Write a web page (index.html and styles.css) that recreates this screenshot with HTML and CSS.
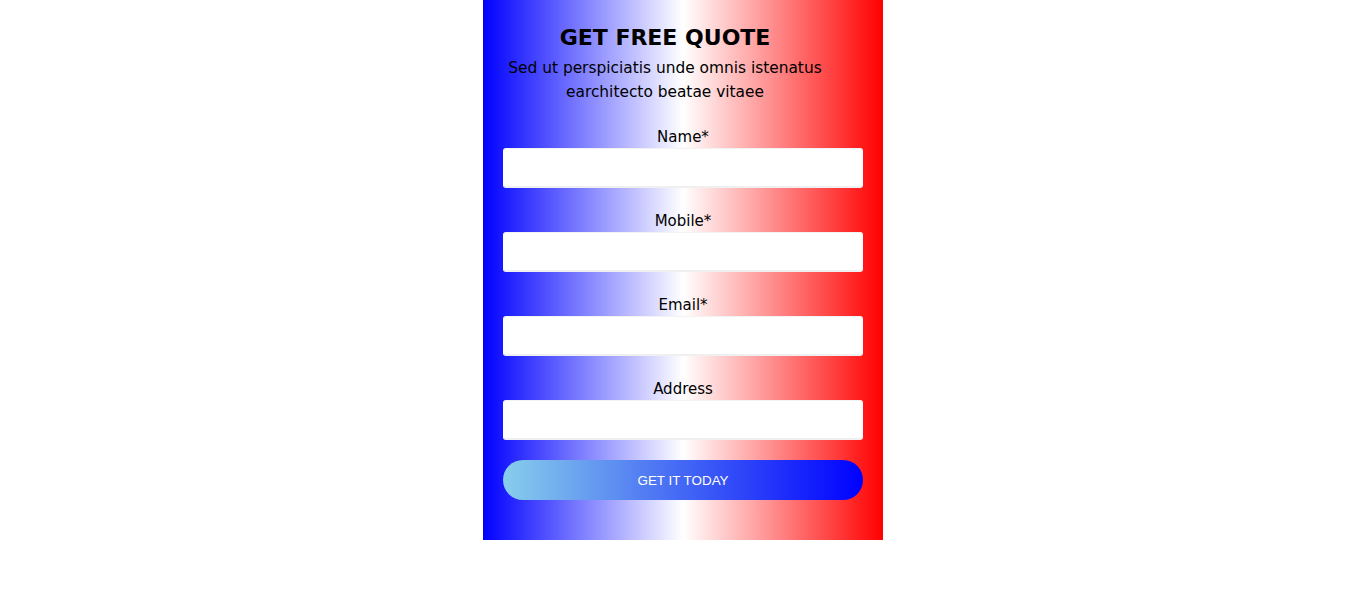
FILE: index.html
```html
<!DOCTYPE html>
<html lang="en">
<head>
<meta charset="utf-8">
<title>Get Free Quote</title>
<link rel="stylesheet" href="styles.css">
</head>
<body>
<div class="quote">
  <div class="quote-head">
    <h2 class="quote-title">GET FREE QUOTE</h2>
    <p class="quote-sub">Sed ut perspiciatis unde omnis istenatus earchitecto beatae vitaee</p>
  </div>
  <form class="quote-form">
    <div class="field">
      <label class="field-label" for="name">Name*</label>
      <input class="field-input" id="name" type="text">
    </div>
    <div class="field">
      <label class="field-label" for="mobile">Mobile*</label>
      <input class="field-input" id="mobile" type="text">
    </div>
    <div class="field">
      <label class="field-label" for="email">Email*</label>
      <input class="field-input" id="email" type="text">
    </div>
    <div class="field">
      <label class="field-label" for="address">Address</label>
      <input class="field-input" id="address" type="text">
    </div>
    <button class="quote-btn" type="button">GET IT TODAY</button>
  </form>
</div>
</body>
</html>
```

FILE: styles.css
```css
html, body {
  margin: 0;
  padding: 0;
  background: #fff;
}
body {
  font-family: "DejaVu Sans", "Liberation Sans", sans-serif;
  color: #000;
}
.quote {
  width: 400px;
  height: 540px;
  box-sizing: border-box;
  margin: 0 auto;
  padding: 23px 20px 20px;
  background: linear-gradient(to right, #0000ff, #ffffff, #ff0000);
}
.quote-head {
  padding-right: 36px;
  text-align: center;
}
.quote-title {
  margin: 0;
  font-size: 22px;
  line-height: 29px;
  font-weight: bold;
}
.quote-sub {
  margin: 4px 0 0;
  font-size: 15.4px;
  line-height: 24px;
}
.quote-form {
  margin-top: 20px;
  display: flex;
  flex-direction: column;
}
.field {
  display: flex;
  flex-direction: column;
  margin-bottom: 20px;
}
.field-label {
  text-align: center;
  font-size: 15px;
  line-height: 24px;
  padding-top: 1px;
  margin-bottom: -1px;
}
.field-input {
  height: 40px;
  box-sizing: border-box;
  border: none;
  border-top: 1px solid #f3f3f3;
  border-bottom: 2px solid #f0f0f0;
  border-radius: 3px;
  background: #fff;
  outline: none;
  margin: 0;
}
.quote-btn {
  height: 40px;
  border: none;
  border-radius: 20px;
  background: linear-gradient(to right, #87ceeb, #0000ff);
  color: #fff;
  font-family: "Liberation Sans", Arial, sans-serif;
  font-size: 13.4px;
  cursor: pointer;
}
```
